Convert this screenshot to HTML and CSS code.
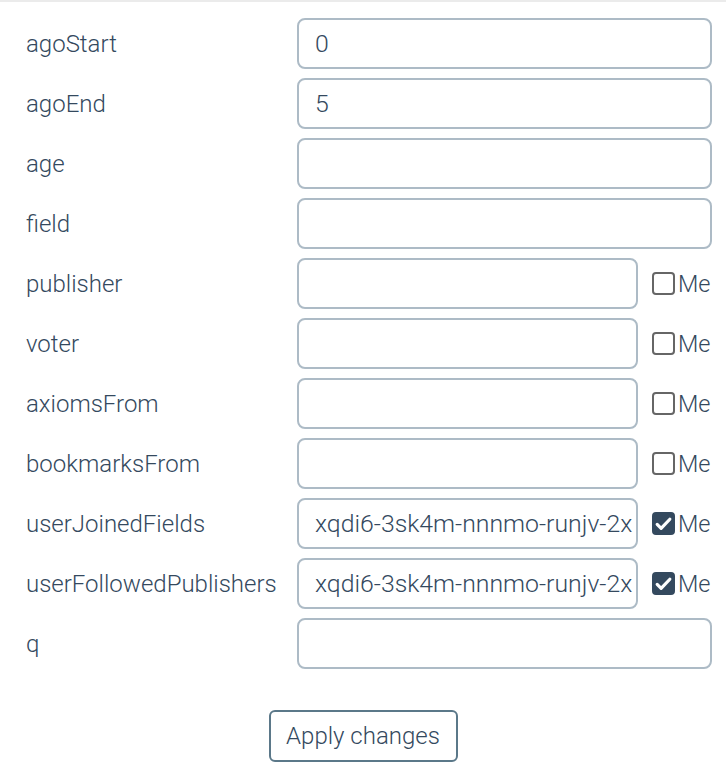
FILE: index.html
```html
<!DOCTYPE html>
<html lang="en">
<head>
    <meta charset="UTF-8">
    <title>Filters</title>
    <link rel="stylesheet" href="styles.css">
</head>
<body>
    <div class="panel">
        <form class="filters">
            <label class="field-label" for="agoStart">agoStart</label>
            <div class="field"><input type="text" id="agoStart" value="0"></div>

            <label class="field-label" for="agoEnd">agoEnd</label>
            <div class="field"><input type="text" id="agoEnd" value="5"></div>

            <label class="field-label" for="age">age</label>
            <div class="field"><input type="text" id="age"></div>

            <label class="field-label" for="field">field</label>
            <div class="field"><input type="text" id="field"></div>

            <label class="field-label" for="publisher">publisher</label>
            <div class="field">
                <input type="text" id="publisher">
                <label class="me"><span class="box"></span>Me</label>
            </div>

            <label class="field-label" for="voter">voter</label>
            <div class="field">
                <input type="text" id="voter">
                <label class="me"><span class="box"></span>Me</label>
            </div>

            <label class="field-label" for="axiomsFrom">axiomsFrom</label>
            <div class="field">
                <input type="text" id="axiomsFrom">
                <label class="me"><span class="box"></span>Me</label>
            </div>

            <label class="field-label" for="bookmarksFrom">bookmarksFrom</label>
            <div class="field">
                <input type="text" id="bookmarksFrom">
                <label class="me"><span class="box"></span>Me</label>
            </div>

            <label class="field-label" for="userJoinedFields">userJoinedFields</label>
            <div class="field">
                <input type="text" id="userJoinedFields" value="xqdi6-3sk4m-nnnmo-runjv-2x">
                <label class="me"><span class="box checked"><svg viewBox="0 0 24 24" width="20" height="20"><path d="M4 12.5l5 5 11-11.5" fill="none" stroke="#fff" stroke-width="4" stroke-linecap="round" stroke-linejoin="round"/></svg></span>Me</label>
            </div>

            <label class="field-label" for="userFollowedPublishers">userFollowedPublishers</label>
            <div class="field">
                <input type="text" id="userFollowedPublishers" value="xqdi6-3sk4m-nnnmo-runjv-2x">
                <label class="me"><span class="box checked"><svg viewBox="0 0 24 24" width="20" height="20"><path d="M4 12.5l5 5 11-11.5" fill="none" stroke="#fff" stroke-width="4" stroke-linecap="round" stroke-linejoin="round"/></svg></span>Me</label>
            </div>

            <label class="field-label" for="q">q</label>
            <div class="field"><input type="text" id="q"></div>
        </form>

        <div class="actions">
            <button class="apply-btn">Apply changes</button>
        </div>
    </div>
</body>
</html>
```

FILE: styles.css
```css
* {
    box-sizing: border-box;
    margin: 0;
    padding: 0;
    font-family: 'Roboto', 'Liberation Sans', sans-serif;
    font-weight: 300;
}

body {
    background: #fff;
    color: #34495e;
}

.panel {
    border-top: 2px solid #ebebeb;
    padding: 16px 14px 14px 26px;
}

.filters {
    display: grid;
    grid-template-columns: 271px minmax(0, 1fr);
    row-gap: 9px;
    align-items: center;
}

.field-label {
    font-size: 24px;
    color: #34495e;
    white-space: nowrap;
}

.field {
    display: flex;
    align-items: center;
    min-width: 0;
}

.field input {
    flex: 1;
    width: 0;
    min-width: 0;
    height: 51px;
    padding: 0 0 0 16px;
    border: 2px solid #adbbc6;
    border-radius: 8px;
    font-size: 24.8px;
    color: #34495e;
    background: #fff;
    outline: none;
}

.me {
    display: flex;
    align-items: center;
    width: 74px;
    padding-left: 14px;
    font-size: 23.5px;
    color: #34495e;
}

.me .box {
    display: flex;
    align-items: center;
    justify-content: center;
    width: 23px;
    height: 23px;
    border: 2px solid #666;
    border-radius: 4px;
    margin-right: 3px;
}

.me .box.checked {
    background: #34495e;
    border-color: #34495e;
}

.actions {
    display: flex;
    justify-content: center;
    padding-top: 41px;
    padding-right: 12px;
}

.apply-btn {
    width: 189px;
    height: 52px;
    background: #fff;
    border: 2px solid #5b7889;
    border-radius: 6px;
    font-size: 24px;
    color: #34495e;
    cursor: pointer;
}
```
